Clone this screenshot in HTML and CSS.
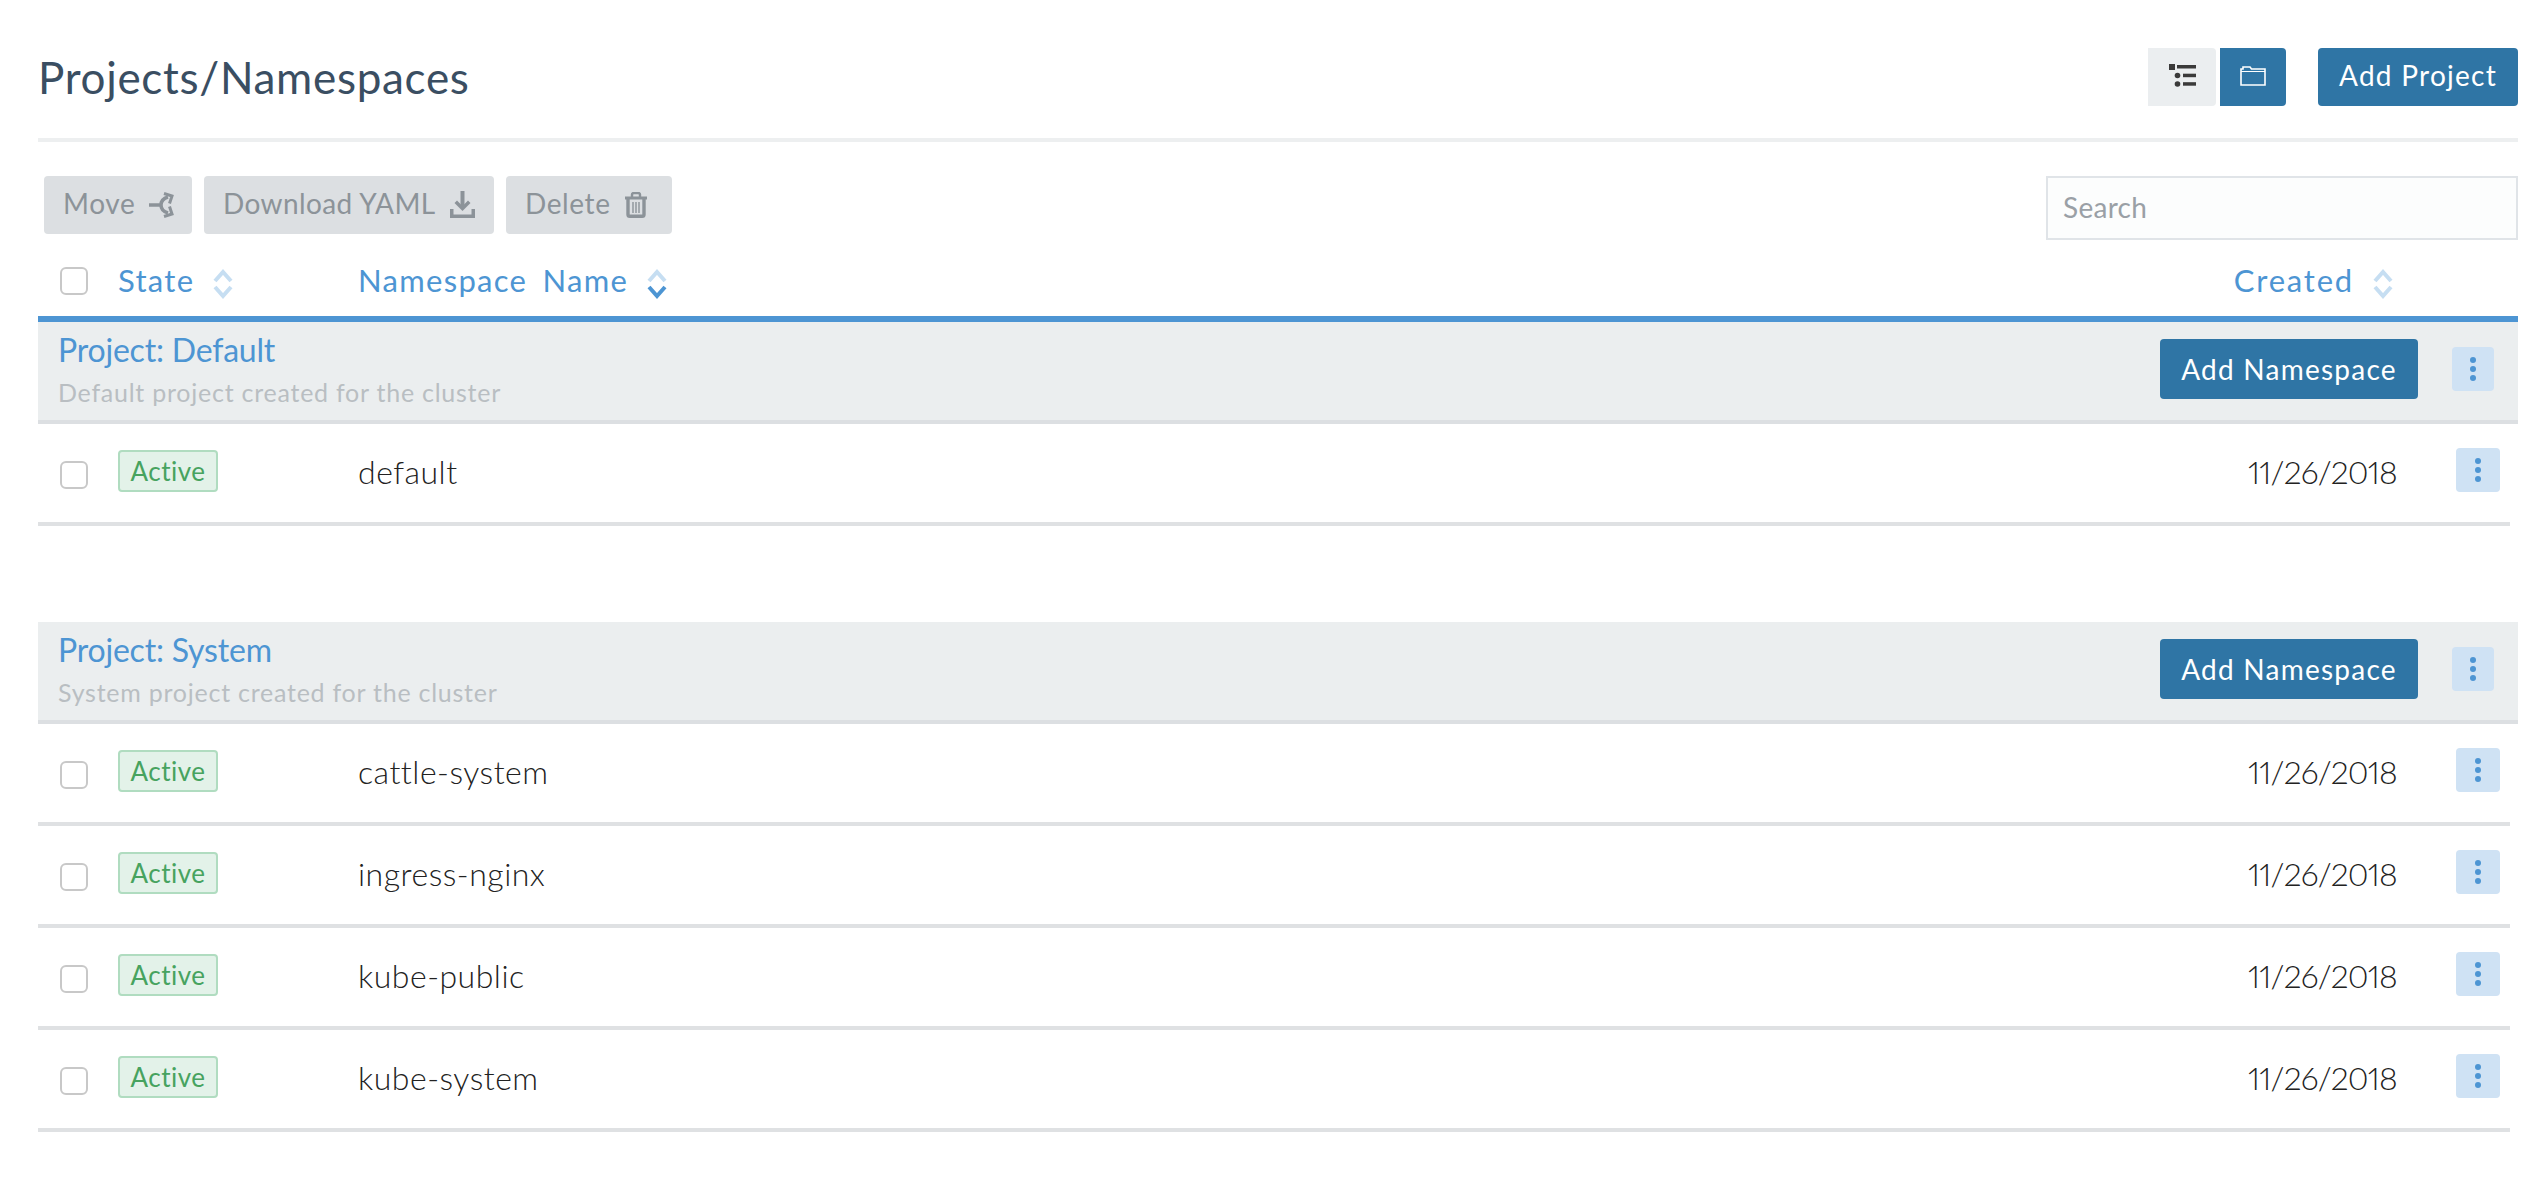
FILE: index.html
```html
<!DOCTYPE html>
<html lang="en">
<head>
    <meta charset="UTF-8">
    <title>Projects/Namespaces</title>
    <link rel="stylesheet" href="styles.css">
</head>
<body>
    <svg class="icon-defs" width="0" height="0">
        <symbol id="dots" viewBox="0 0 12 26">
            <circle cx="6" cy="4" r="3"/><circle cx="6" cy="13" r="3"/><circle cx="6" cy="22" r="3"/>
        </symbol>
    </svg>

    <header class="page-header">
        <h1>Projects/Namespaces</h1>
        <div class="view-switch">
            <button class="btn-view">
                <svg width="27" height="23" viewBox="0 0 27 23" fill="#3a3a3a"><rect x="0" y="0" width="6" height="6"/><rect x="8" y="1" width="19" height="3.500"/><circle cx="8.500" cy="11.500" r="2.800"/><rect x="14" y="9.700" width="13" height="3.500"/><circle cx="8.500" cy="20" r="2.800"/><rect x="14" y="18.200" width="13" height="3.500"/></svg>
            </button>
            <button class="btn-view active">
                <svg width="26" height="20" viewBox="0 0 26 20" fill="none" stroke="#fff" stroke-width="1.600"><path d="M1 19V3h2V1h7l1.500 2H25v16z"/><path d="M1 5.500h24" stroke-width="1"/></svg>
            </button>
        </div>
        <button class="btn-primary add-project">Add Project</button>
    </header>

    <div class="toolbar">
        <div class="bulk-actions">
            <button class="btn-bulk btn-move"><span>Move</span>
                <svg width="25" height="26" viewBox="0 0 25 26" fill="none" stroke="#8c9399"><path d="M0 13h12" stroke-width="3.500"/><path d="M19 5c-5 1.500-7 4.500-7 8s2 6.500 7 8" stroke-width="3.500"/><path d="M15 1.500l8 2.500-2.500 7.500M15 24.500l8-2.500-2.500-7.500" stroke-width="3"/></svg>
            </button>
            <button class="btn-bulk btn-download"><span>Download YAML</span>
                <svg width="25" height="27" viewBox="0 0 25 27" fill="#8c9399"><rect x="10.500" y="0" width="4" height="15"/><path d="M4.500 12l2.500-2.500 5.500 5.500 5.500-5.500 2.500 2.500-8 8z"/><path d="M0 18h3.500v5.500h18V18H25v9H0z"/></svg>
            </button>
            <button class="btn-bulk btn-delete"><span>Delete</span>
                <svg width="22" height="26" viewBox="0 0 22 26" fill="none" stroke="#8c9399"><path d="M0 6h22" stroke-width="3"/><path d="M7 5V2.500C7 1.500 8 1 9 1h4c1 0 2 .5 2 1.500V5" stroke-width="2.400"/><path d="M3 7v15.500c0 1 .8 1.800 1.800 1.800h12.400c1 0 1.800-.8 1.800-1.800V7" stroke-width="3.400"/><path d="M8 10v11M11 10v11M14 10v11" stroke-width="1.400"/></svg>
            </button>
        </div>
        <input class="search" type="text" placeholder="Search">
    </div>

    <div class="table-head">
        <span class="checkbox"></span>
        <div class="col-state"><span>State</span>
            <svg class="sort" width="20" height="30" viewBox="0 0 20 30" fill="none" stroke="#c6def2" stroke-width="4"><path d="M2 12l8-9 8 9"/><path d="M2 18l8 9 8-9"/></svg>
        </div>
        <div class="col-name"><span class="name-label">Namespace Name</span>
            <svg class="sort" width="20" height="30" viewBox="0 0 20 30" fill="none" stroke="#c6def2" stroke-width="4"><path d="M2 12l8-9 8 9"/><path d="M2 18l8 9 8-9" stroke="#4d95d3"/></svg>
        </div>
        <div class="col-created"><span>Created</span>
            <svg class="sort" width="20" height="30" viewBox="0 0 20 30" fill="none" stroke="#c6def2" stroke-width="4"><path d="M2 12l8-9 8 9"/><path d="M2 18l8 9 8-9"/></svg>
        </div>
    </div>

    <section class="project first">
        <div class="project-head">
            <div class="project-info">
                <h2>Project: Default</h2>
                <p>Default project created for the cluster</p>
            </div>
            <button class="btn-primary add-ns">Add Namespace</button>
            <button class="btn-menu group-menu"><svg width="12" height="26"><use href="#dots"/></svg></button>
        </div>
        <div class="row">
            <span class="checkbox"></span>
            <div class="col-state"><span class="badge">Active</span></div>
            <div class="col-name">default</div>
            <div class="col-date">11/26/2018</div>
            <button class="btn-menu"><svg width="12" height="26"><use href="#dots"/></svg></button>
        </div>
    </section>

    <section class="project">
        <div class="project-head">
            <div class="project-info">
                <h2>Project: System</h2>
                <p>System project created for the cluster</p>
            </div>
            <button class="btn-primary add-ns">Add Namespace</button>
            <button class="btn-menu group-menu"><svg width="12" height="26"><use href="#dots"/></svg></button>
        </div>
        <div class="row">
            <span class="checkbox"></span>
            <div class="col-state"><span class="badge">Active</span></div>
            <div class="col-name">cattle-system</div>
            <div class="col-date">11/26/2018</div>
            <button class="btn-menu"><svg width="12" height="26"><use href="#dots"/></svg></button>
        </div>
        <div class="row">
            <span class="checkbox"></span>
            <div class="col-state"><span class="badge">Active</span></div>
            <div class="col-name">ingress-nginx</div>
            <div class="col-date">11/26/2018</div>
            <button class="btn-menu"><svg width="12" height="26"><use href="#dots"/></svg></button>
        </div>
        <div class="row">
            <span class="checkbox"></span>
            <div class="col-state"><span class="badge">Active</span></div>
            <div class="col-name">kube-public</div>
            <div class="col-date">11/26/2018</div>
            <button class="btn-menu"><svg width="12" height="26"><use href="#dots"/></svg></button>
        </div>
        <div class="row">
            <span class="checkbox"></span>
            <div class="col-state"><span class="badge">Active</span></div>
            <div class="col-name">kube-system</div>
            <div class="col-date">11/26/2018</div>
            <button class="btn-menu"><svg width="12" height="26"><use href="#dots"/></svg></button>
        </div>
    </section>
</body>
</html>
```

FILE: styles.css
```css
* {
    box-sizing: border-box;
}
body {
    margin: 0;
    padding: 48px 24px 0 38px;
    background-color: #fff;
    font-family: Lato, "Open Sans", sans-serif;
    color: #222;
}
button {
    font-family: inherit;
    border: none;
    border-radius: 4px;
    cursor: pointer;
}
.icon-defs {
    position: absolute;
}
.page-header {
    display: flex;
    align-items: flex-start;
    height: 94px;
    border-bottom: 4px solid #edeff0;
}
.page-header h1 {
    flex: 1;
    margin: 0;
    font-size: 44px;
    font-weight: 400;
    line-height: 58px;
    letter-spacing: 0.7px;
    color: #3a4e62;
}
.view-switch {
    display: flex;
    gap: 4px;
    margin-right: 32px;
}
.btn-view {
    display: flex;
    align-items: center;
    justify-content: center;
    width: 68px;
    height: 58px;
    padding: 0 0 3px;
    background-color: #ebeef0;
    border-radius: 0 4px 4px 0;
}
.btn-view.active {
    width: 66px;
    background-color: #2f75a5;
}
.btn-primary {
    background-color: #2f75a5;
    color: #fff;
    font-size: 28px;
    letter-spacing: 1.25px;
}
.add-project {
    width: 200px;
    height: 58px;
    padding-bottom: 5px;
}
.toolbar {
    display: flex;
    justify-content: space-between;
    margin-top: 34px;
}
.bulk-actions {
    display: flex;
    gap: 12px;
    padding-left: 6px;
}
.btn-bulk {
    display: flex;
    align-items: center;
    gap: 14px;
    height: 58px;
    padding: 0 0 0 19px;
    background-color: #dcdfe2;
    color: #8c9399;
    font-size: 28px;
    letter-spacing: 0.6px;
}
.btn-bulk span {
    margin-bottom: 4px;
}
.btn-bulk svg {
    margin-bottom: 1px;
}
.btn-move {
    width: 148px;
}
.btn-download {
    width: 290px;
    letter-spacing: 0.4px;
}
.btn-delete {
    width: 166px;
}
.search {
    width: 472px;
    height: 64px;
    padding: 0 0 3px 15px;
    border: 2px solid #e0e4e8;
    background-color: #fcfdfd;
    font-family: inherit;
    font-size: 28px;
    letter-spacing: 0.3px;
}
.search::placeholder {
    color: #9aa0a6;
}
.table-head {
    display: flex;
    align-items: center;
    height: 72px;
    margin-top: 10px;
    padding: 0 0 4px 22px;
    border-bottom: 6px solid #4d95d3;
    color: #4d95d3;
    font-size: 31px;
    letter-spacing: 1.3px;
}
.table-head > div {
    display: flex;
    align-items: center;
    gap: 19px;
}
.table-head span:not(.checkbox) {
    margin-bottom: 2px;
}
.table-head .sort {
    margin-top: 6px;
}
.table-head .name-label {
    word-spacing: 6px;
}
.table-head .col-created {
    margin-right: 125px;
    letter-spacing: 1.8px;
}
.checkbox {
    flex: none;
    width: 28px;
    height: 28px;
    margin-right: 30px;
    border: 2px solid #c8c8c8;
    border-radius: 6px;
    background-color: #fff;
}
.col-state {
    flex: none;
    width: 240px;
}
.col-name {
    flex: 1;
}
.project {
    margin-top: 96px;
}
.project.first {
    margin-top: 0;
}
.project-head {
    display: flex;
    align-items: center;
    height: 102px;
    padding: 0 24px 4px 20px;
    background-color: #ebeeef;
    border-bottom: 4px solid #dcdfe2;
}
.project-info {
    flex: 1;
    margin-top: -2px;
}
.project-info h2 {
    margin: 0;
    font-size: 32px;
    font-weight: 400;
    line-height: 42px;
    letter-spacing: -0.2px;
    color: #4d95d3;
}
.project-info p {
    margin: 5px 0 0;
    font-size: 25px;
    line-height: 32px;
    letter-spacing: 0.75px;
    color: #b9bec2;
}
.add-ns {
    width: 258px;
    height: 60px;
}
.btn-menu {
    display: flex;
    align-items: center;
    justify-content: center;
    width: 44px;
    height: 44px;
    padding: 0;
    background-color: #cfe2f4;
    fill: #4d95d3;
}
.group-menu {
    width: 42px;
    margin-left: 34px;
}
.row {
    display: flex;
    align-items: center;
    height: 102px;
    margin-right: 8px;
    padding: 0 10px 4px 22px;
    border-bottom: 4px solid #dfe1e3;
    font-size: 32px;
    font-weight: 300;
    letter-spacing: 0.5px;
}
.row > .checkbox {
    margin-top: 8px;
}
.row .btn-menu {
    margin-top: -2px;
}
.badge {
    display: inline-block;
    width: 100px;
    height: 42px;
    margin-bottom: 1px;
    border: 2px solid #b0dcc0;
    border-radius: 4px;
    background-color: #e3f2e9;
    color: #47a35f;
    font-size: 26px;
    font-weight: 400;
    line-height: 38px;
    text-align: center;
}
.col-date {
    margin-right: 59px;
    letter-spacing: -0.8px;
    font-variant-numeric: proportional-nums;
    font-feature-settings: "pnum";
}
```
